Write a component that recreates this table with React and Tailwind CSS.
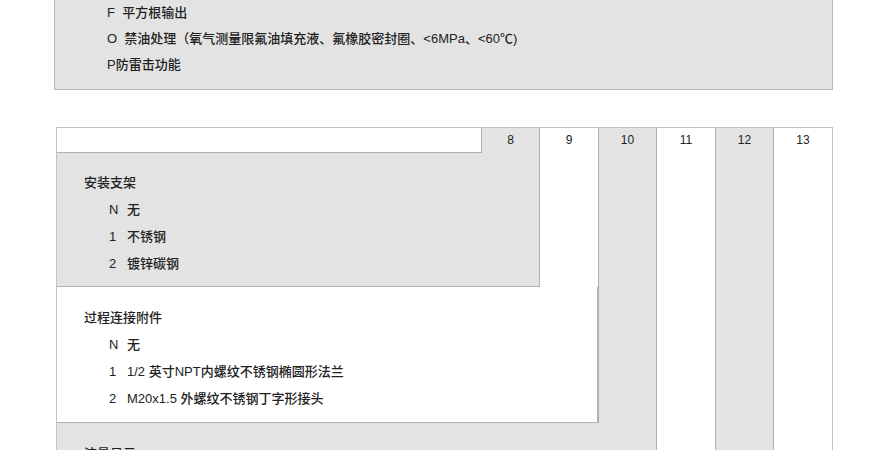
import React from 'react';

const font = { fontFamily: '"Liberation Sans", "Noto Sans CJK SC", sans-serif' };

const Section = ({ title, items, className }) => (
  <div className={`pl-[27px] pt-4 text-[13px] leading-[27px] text-[#222] font-medium ${className}`}>
    <div>{title}</div>
    {items.map((it) => (
      <div key={it[0]} className="pl-[25px] flex">
        <span className="w-[18px]">{it[0]}</span>
        <span>{it[1]}</span>
      </div>
    ))}
  </div>
);

const App = () => {
  return (
    <div className="w-[880px] h-[450px] overflow-hidden bg-white" style={font}>
      {/* top options box */}
      <div className="ml-[54px] w-[779px] bg-[#e3e3e3] border border-t-0 border-[#b8b8b8] pl-[52px] pb-[11px] text-[13px] leading-[26px] text-[#222] font-medium">
        <div>F&nbsp;&nbsp;平方根输出</div>
        <div>O&nbsp;&nbsp;禁油处理（氧气测量限氟油填充液、氟橡胶密封圈、&lt;6MPa、&lt;60℃)</div>
        <div>P防雷击功能</div>
      </div>

      {/* staircase table */}
      <div className="ml-[56px] mt-[37px] w-[777px] grid grid-cols-[425px_58px_58px_59px_58px_59px_59px] grid-rows-[25px_134px_136px_140px] border-l border-t border-[#c4c4c4] text-[#222]">
        <div className="col-start-1 row-start-1 bg-white border-r border-b border-[#b0b0b0]" />

        <div className="col-start-2 row-start-1 row-span-2 bg-[#e3e3e3] border-r border-[#b0b0b0] text-center text-[12px] leading-[25px]">8</div>
        <div className="col-start-3 row-start-1 row-span-3 bg-white text-center text-[12px] leading-[25px]">9</div>
        <div className="col-start-4 row-start-1 row-span-4 bg-[#e3e3e3] border-l border-r border-[#b0b0b0] text-center text-[12px] leading-[25px]">10</div>
        <div className="col-start-5 row-start-1 row-span-4 bg-white text-center text-[12px] leading-[25px]">11</div>
        <div className="col-start-6 row-start-1 row-span-4 bg-[#e3e3e3] border-l border-r border-[#b0b0b0] text-center text-[12px] leading-[25px]">12</div>
        <div className="col-start-7 row-start-1 row-span-4 bg-white border-r border-[#c4c4c4] text-center text-[12px] leading-[25px]">13</div>

        <Section
          className="col-start-1 col-end-3 row-start-2 bg-[#e3e3e3] border-r border-b border-[#b0b0b0]"
          title="安装支架"
          items={[['N', '无'], ['1', '不锈钢'], ['2', '镀锌碳钢']]}
        />
        <Section
          className="col-start-1 col-end-4 row-start-3 bg-white border-r border-b border-[#b0b0b0] pt-[17px]"
          title="过程连接附件"
          items={[['N', '无'], ['1', ' 1/2 英寸NPT内螺纹不锈钢椭圆形法兰'], ['2', ' M20x1.5 外螺纹不锈钢丁字形接头']]}
        />
        <Section
          className="col-start-1 col-end-5 row-start-4 bg-[#e3e3e3] border-r border-[#b0b0b0] pt-[17px]"
          title="流量显示"
          items={[]}
        />
      </div>
    </div>
  );
};

export default App;
